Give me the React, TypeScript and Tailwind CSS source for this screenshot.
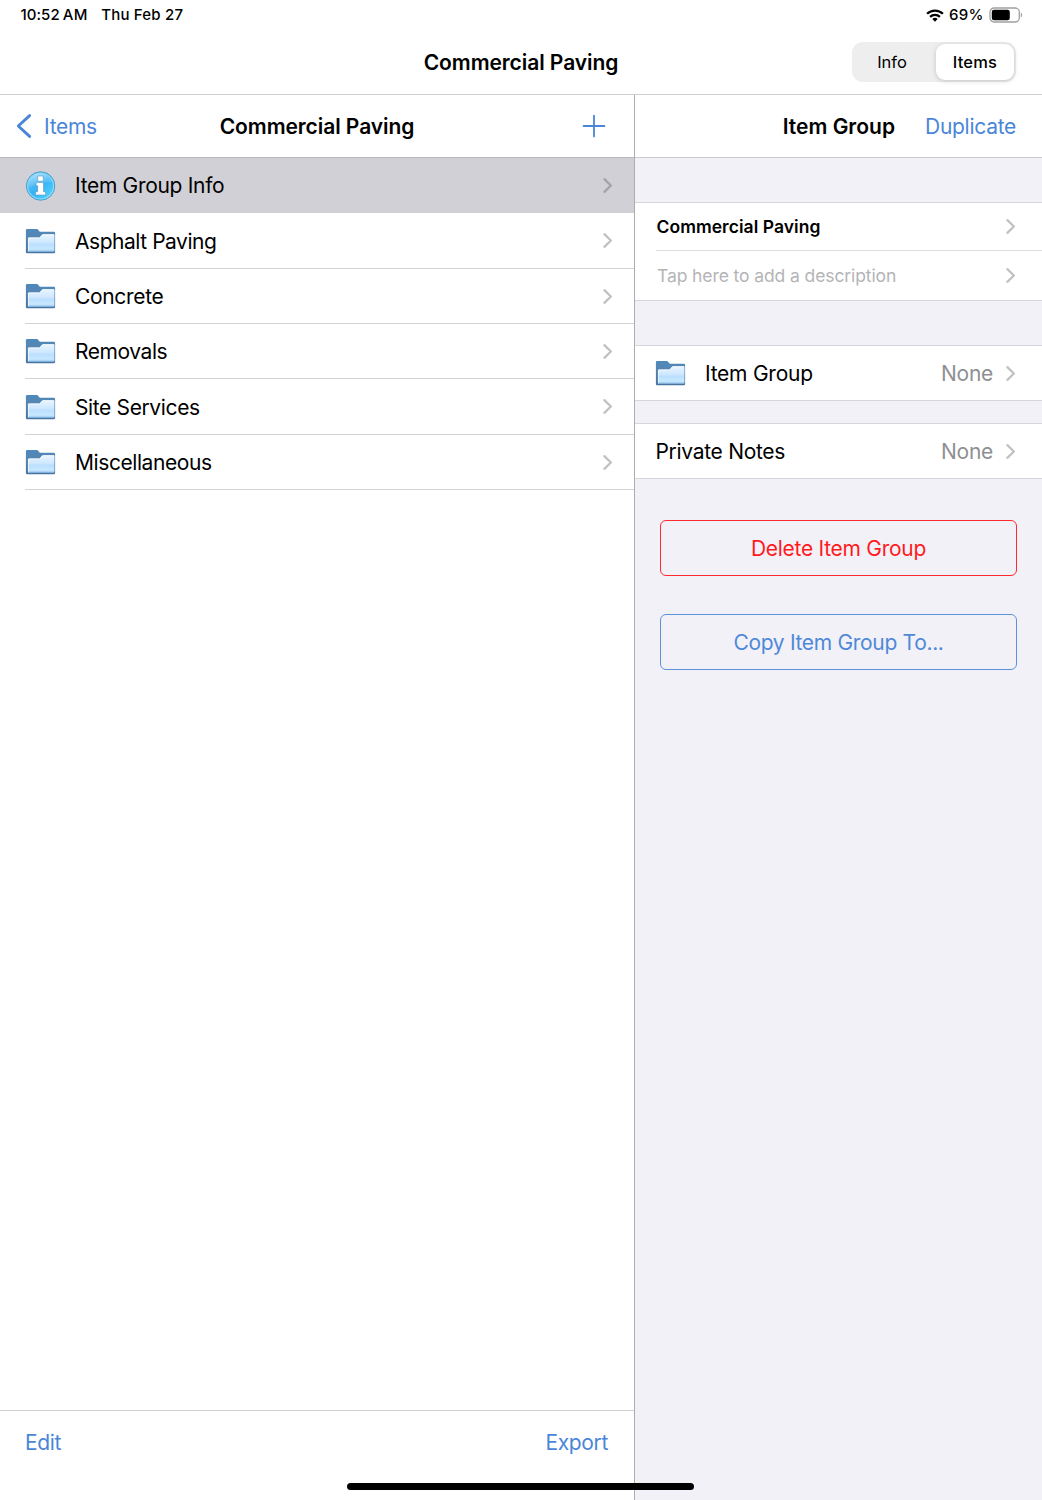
import React from "react";

function Chevron({ className = "text-[#c1c1c3]" }: { className?: string }) {
  return (
    <svg className={`h-[17px] w-[11px] shrink-0 ${className}`} viewBox="0 0 11 17" fill="none" stroke="currentColor" strokeWidth="2.3" strokeLinecap="round" strokeLinejoin="round">
      <path d="M2.4 2.2 8.9 8.5 2.4 14.8" />
    </svg>
  );
}

function FolderIcon() {
  return (
    <svg className="h-[26px] w-[31px] shrink-0" viewBox="-0.6 0 31 26">
      <defs>
        <linearGradient id="folderBack" x1="0" y1="0" x2="0" y2="1">
          <stop offset="0" stopColor="#4f89bd" />
          <stop offset="0.35" stopColor="#5585b0" />
          <stop offset="1" stopColor="#4673a0" />
        </linearGradient>
        <linearGradient id="folderFront" x1="0" y1="0" x2="0" y2="1">
          <stop offset="0" stopColor="#e9f5ff" />
          <stop offset="0.5" stopColor="#cce6ff" />
          <stop offset="0.55" stopColor="#b9deff" />
          <stop offset="0.85" stopColor="#c9e8ff" />
          <stop offset="1" stopColor="#8fbfe9" />
        </linearGradient>
      </defs>
      <path d="M0.3 2.2Q0.3 1 1.5 1H11.2Q12 1 12.5 1.7L14.2 3.7H28.2Q29.5 3.7 29.5 5V24Q29.5 25.3 28.2 25.3H1.6Q0.3 25.3 0.3 24Z" fill="url(#folderBack)" />
      <path d="M2.4 23.8V10.4Q2.4 9.5 3.3 9.5H13.2Q14 9.5 14.5 8.9L16.2 6.9Q16.7 6.3 17.4 6.3H28Q28.9 6.3 28.9 7.2V23Q28.9 23.8 28 23.8Z" fill="url(#folderFront)" />
      <path d="M2.8 23.3V10.4Q2.8 9.9 3.3 9.9H13.3Q14.2 9.9 14.8 9.2L16.5 7.2Q16.8 6.7 17.4 6.7H28Q28.5 6.7 28.5 7.2" fill="none" stroke="#fff" strokeOpacity="0.85" strokeWidth="0.8" />
    </svg>
  );
}

function InfoIcon() {
  return (
    <svg className="h-[30px] w-[31px] shrink-0" viewBox="-0.6 0 31 30">
      <defs>
        <linearGradient id="infoFill" x1="0" y1="0" x2="1" y2="1">
          <stop offset="0" stopColor="#6cc4f4" />
          <stop offset="0.5" stopColor="#35b2f5" />
          <stop offset="1" stopColor="#5bdcff" />
        </linearGradient>
        <linearGradient id="infoGloss" x1="0" y1="0" x2="0.4" y2="1">
          <stop offset="0" stopColor="#d3f0ff" stopOpacity="0.85" />
          <stop offset="1" stopColor="#7bd0fa" stopOpacity="0.15" />
        </linearGradient>
      </defs>
      <circle cx="15" cy="15" r="14.2" fill="url(#infoFill)" stroke="#4795c2" strokeWidth="0.9" />
      <circle cx="15" cy="15" r="13" fill="none" stroke="#a5e6ff" strokeOpacity="0.7" strokeWidth="1.2" />
      <path d="M2.6 17A12.6 12.6 0 0 1 27 11Q15 10 2.6 17Z" fill="url(#infoGloss)" />
      <path d="M12.1 5H17.7V10.2H12.1ZM10.5 11.6H17.9V20.8H20V24H10V20.8H12.1V14.8H10.5Z" fill="#fff" stroke="#5a93b5" strokeWidth="0.6" strokeLinejoin="round" />
    </svg>
  );
}

function StatusBar() {
  return (
    <div className="flex h-[30px] items-center pl-[20.5px] pr-[19.5px] text-[15px] font-medium">
      <span className="tracking-[0.05px]">10:52</span>
      <span className="ml-[3px] tracking-[0.3px]">AM</span>
      <span className="ml-[13.5px] tracking-[0.2px]">Thu Feb 27</span>
      <svg className="ml-auto h-[13px] w-[18px]" viewBox="0 0 18 13" fill="none" stroke="#000" strokeWidth="2.3">
        <path d="M1.1 4.8A11.2 11.2 0 0 1 16.9 4.8" />
        <path d="M4.1 7.9A6.9 6.9 0 0 1 13.9 7.9" />
        <path d="M9 12.7 6.3 10A3.9 3.9 0 0 1 11.7 10Z" fill="#000" stroke="none" />
      </svg>
      <span className="ml-[5px] tracking-[0.2px]">69%</span>
      <svg className="ml-[5px] h-[16px] w-[34px]" viewBox="0 0 34 16">
        <rect x="1" y="1" width="29.3" height="14" rx="4.2" fill="none" stroke="#a0a0a0" strokeWidth="1.3" />
        <rect x="2.8" y="2.8" width="18" height="10.4" rx="2.3" fill="#000" />
        <path d="M31.8 5.6Q33.2 6.4 33.2 8T31.8 10.4Z" fill="#a0a0a0" />
      </svg>
    </div>
  );
}

const groups = [
  { name: "Asphalt Paving", text: "tracking-[-0.46px]", row: "h-[56px]" },
  { name: "Concrete", text: "tracking-[-0.33px]", row: "h-[55px]" },
  { name: "Removals", text: "tracking-[-0.44px]", row: "h-[55px]" },
  { name: "Site Services", text: "tracking-[-0.37px]", row: "h-[56px]" },
  { name: "Miscellaneous", text: "tracking-[-0.42px]", row: "h-[55px]" },
];

function LeftPane() {
  return (
    <section className="flex w-[635px] shrink-0 flex-col border-r border-[#adadb0] bg-white">
      <div className="grid h-[63px] grid-cols-[1fr_auto_1fr] items-center border-b border-[#b9b9bd] pl-[16px] pr-[28px]">
        <button className="flex items-center text-[#4a86d8]">
          <svg className="h-[26px] w-[16px]" viewBox="0 0 16 26" fill="none" stroke="currentColor" strokeWidth="2.9" strokeLinecap="round" strokeLinejoin="round">
            <path d="M13.6 2.6 2.3 13 13.6 23.4" />
          </svg>
          <span className="ml-[12px] pt-px tracking-[-0.3px]">Items</span>
        </button>
        <h2 className="pl-[12px] pt-px font-semibold tracking-[-0.07px]">Commercial Paving</h2>
        <button className="justify-self-end text-[#4a86d8]">
          <svg className="h-[24px] w-[24px]" viewBox="0 0 24 24" stroke="currentColor" strokeWidth="1.8" strokeLinecap="round">
            <path d="M12 1.6V22.4M1.6 12H22.4" />
          </svg>
        </button>
      </div>
      <div className="flex h-[55px] items-center bg-[#d1d0d6] pl-[25px] pr-[21px]">
        <InfoIcon />
        <span className="ml-[19px] flex-1 pt-px tracking-[-0.31px]">Item Group Info</span>
        <Chevron className="text-[#a2a2a7]" />
      </div>
      {groups.map((g) => (
        <div key={g.name} className={`ml-[25px] flex items-center border-b border-[#d3d3d6] pr-[21px] ${g.row}`}>
          <FolderIcon />
          <span className={`ml-[19px] flex-1 pt-[2px] ${g.text}`}>{g.name}</span>
          <Chevron />
        </div>
      ))}
      <div className="mt-auto flex h-[90px] justify-between border-t border-[#d0d0d3] pl-[25px] pr-[26px] pt-[16px] leading-[32px] text-[#4a86d8]">
        <button className="h-[32px] tracking-[-0.35px]">Edit</button>
        <button className="h-[32px] tracking-[-0.35px]">Export</button>
      </div>
    </section>
  );
}

function RightPane() {
  return (
    <section className="flex flex-1 flex-col bg-[#f2f1f7]">
      <div className="flex h-[63px] items-center justify-end border-b border-[#cbcbcf] bg-white pr-[26px] pt-px">
        <h2 className="font-semibold">Item Group</h2>
        <button className="ml-[30px] tracking-[-0.28px] text-[#4a86d8]">Duplicate</button>
      </div>

      <div className="mt-[44px] border-y border-[#d6d6da] bg-white pl-[21px] text-[17.5px]">
        <div className="flex h-[48px] items-center border-b border-[#dededf] pr-[26px]">
          <span className="flex-1 pl-[0.5px] pt-px font-semibold tracking-[0.04px]">Commercial Paving</span>
          <Chevron />
        </div>
        <div className="flex h-[49px] items-center pr-[26px]">
          <span className="flex-1 pl-px pt-px tracking-[-0.1px] text-[#b4b4b6]">Tap here to add a description</span>
          <Chevron />
        </div>
      </div>

      <div className="mt-[44px] flex h-[56px] items-center border-y border-[#d6d6da] bg-white pl-[20px] pr-[26px]">
        <FolderIcon />
        <span className="ml-[19px] flex-1 pt-[2px] tracking-[-0.25px]">Item Group</span>
        <span className="mr-[12px] pt-[2px] tracking-[-0.27px] text-[#8f8f93]">None</span>
        <Chevron />
      </div>

      <div className="mt-[22px] flex h-[56px] items-center border-y border-[#d6d6da] bg-white pl-[20.5px] pr-[26px]">
        <span className="flex-1 pt-[2px] tracking-[-0.3px]">Private Notes</span>
        <span className="mr-[12px] pt-[2px] tracking-[-0.27px] text-[#8f8f93]">None</span>
        <Chevron />
      </div>

      <button className="ml-[25px] mr-[25px] mt-[41px] h-[56px] rounded-[6px] border border-[#ff2a2e] pt-[2px] tracking-[-0.27px] text-[#ff1a1e]">Delete Item Group</button>
      <button className="ml-[25px] mr-[25px] mt-[38px] h-[56px] rounded-[6px] border border-[#5b92dc] pt-[2px] tracking-[-0.32px] text-[#4f89d8]">Copy Item Group To...</button>
    </section>
  );
}

export default function App() {
  return (
    <div className="relative flex h-[1500px] w-[1042px] flex-col overflow-hidden bg-white font-['Inter',sans-serif] text-[21px] leading-[26px] text-black">
      <header className="flex h-[95px] flex-col border-b border-[#cfcfd2]">
        <StatusBar />
        <div className="grid h-[64px] grid-cols-[1fr_auto_1fr] items-center pr-[26px]">
          <h1 className="col-start-2 pl-[26px] pt-px font-semibold tracking-[-0.07px]">Commercial Paving</h1>
          <div className="flex h-[40px] w-[164px] justify-self-end rounded-[11px] bg-[#eeeeee] p-[2px] text-[16.5px]">
            <button className="flex-1 pr-[6px]">Info</button>
            <button className="w-[78px] rounded-[9px] bg-white font-medium tracking-[0.2px] shadow-[0_1px_5px_rgba(0,0,0,0.18)]">Items</button>
          </div>
        </div>
      </header>
      <main className="flex flex-1">
        <LeftPane />
        <RightPane />
      </main>
      <div className="absolute bottom-[10px] left-[347px] h-[7px] w-[347px] rounded-full bg-black" />
    </div>
  );
}
